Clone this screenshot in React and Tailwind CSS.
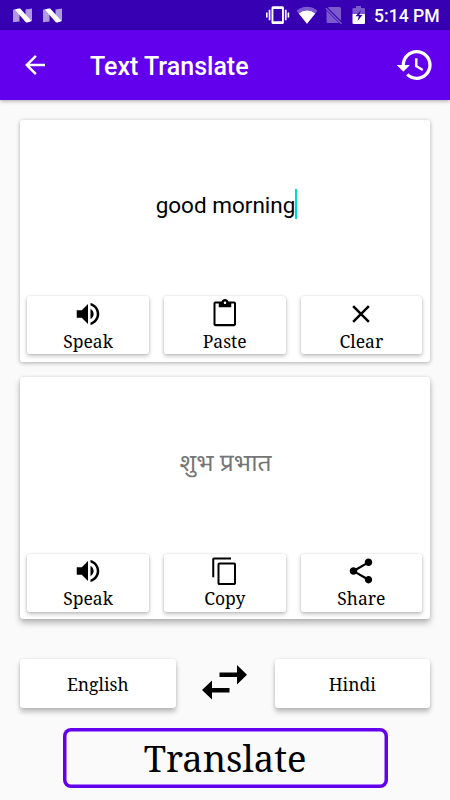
const serif = "font-['Noto_Serif','Droid_Serif','DejaVu_Serif_Condensed','DejaVu_Serif',serif]";

const paths = {
  back: 'M20 11H7.83l5.59-5.59L12 4l-8 8 8 8 1.41-1.41L7.83 13H20v-2z',
  history:
    'M13 3c-4.97 0-9 4.03-9 9H1l3.89 3.89.07.14L9 12H6c0-3.87 3.13-7 7-7s7 3.13 7 7-3.13 7-7 7c-1.93 0-3.68-.79-4.94-2.06l-1.42 1.42C8.27 19.99 10.51 21 13 21c4.97 0 9-4.03 9-9s-4.03-9-9-9zm-1 5v5l4.28 2.54.72-1.21-3.5-2.08V8H12z',
  speak:
    'M3 9v6h4l5 5V4L7 9H3zm13.5 3c0-1.77-1.02-3.29-2.5-4.03v8.05c1.48-.73 2.5-2.25 2.5-4.02zM14 3.23v2.06c2.89.86 5 3.54 5 6.71s-2.11 5.85-5 6.71v2.06c4.01-.91 7-4.49 7-8.77s-2.99-7.86-7-8.77z',
  paste:
    'M19.300 2h-4.480C14.4.84 13.3 0 12 0c-1.3 0-2.4.84-2.82 2H4.300C3.500 2 2.800 2.700 2.800 3.500v16.700c0 .8.7 1.500 1.500 1.500h15c.8 0 1.500-.7 1.500-1.500V3.500c0-.8-.7-1.500-1.500-1.500zM12 1.900c.6 0 1 .5 1 1.100s-.4 1-1 1-1-.4-1-1 .4-1.100 1-1.100zM19.200 20H4.400V3.600H7V6.600h10V3.600h2.200z',
  clear: 'M19 6.41L17.59 5 12 10.59 6.41 5 5 6.41 10.59 12 5 17.59 6.41 19 12 13.41 17.59 19 19 17.59 13.41 12z',
  copy: 'M16.800 1.200H3.300c-.9 0-1.500.6-1.500 1.500V17h1.600V2.800h13.400zM19.300 5.200H7.500C6.700 5.200 6 5.900 6 6.700v15c0 .8.7 1.500 1.500 1.500h11.800c.8 0 1.500-.7 1.500-1.500v-15c0-.8-.7-1.500-1.500-1.500zM19.200 21.600H7.600V6.800h11.600z',
  share:
    'M18 16.08c-.76 0-1.44.3-1.96.77L8.91 12.7c.05-.23.09-.46.09-.7s-.04-.47-.09-.7l7.05-4.11c.54.5 1.25.81 2.04.81 1.66 0 3-1.34 3-3s-1.34-3-3-3-3 1.34-3 3c0 .24.04.47.09.7L8.04 9.81C7.5 9.31 6.79 9 6 9c-1.66 0-3 1.34-3 3s1.34 3 3 3c.79 0 1.5-.31 2.04-.81l7.12 4.16c-.05.21-.08.43-.08.65 0 1.61 1.31 2.92 2.92 2.92s2.92-1.31 2.92-2.92-1.31-2.92-2.92-2.92z',
};

function Icon({ name, className }) {
  return (
    <svg viewBox="0 0 24 24" fill="currentColor" fillRule="evenodd" className={className}>
      <path d={paths[name]} />
    </svg>
  );
}

function NLogo() {
  return (
    <svg viewBox="0 0 19 15" className="h-[15px] w-[19px]" fill="#fff">
      <path d="M0 1.800 3 1 6.500 5v8.500L0 14.300z" opacity=".6" />
      <path d="M12.500 1.500 19 .5v12.500L16.500 14 12.500 9z" opacity=".6" />
      <path d="M2 1.800Q5 0 7.200.5L18.300 12.700Q15.500 15 12.800 14.200z" />
    </svg>
  );
}

function StatusBar() {
  return (
    <div className="flex h-[30px] items-center bg-[#3700b3] pl-[13px] pr-[10px] text-white">
      <NLogo />
      <div className="w-[11px]" />
      <NLogo />
      <svg viewBox="0 0 100 30" className="ml-auto h-[30px] w-[100px]" fill="#fff">
        <path d="M7 6.2h9.4a1.5 1.5 0 0 1 1.5 1.5v14.8a1.5 1.5 0 0 1-1.5 1.5H7a1.5 1.5 0 0 1-1.5-1.5V7.7A1.5 1.5 0 0 1 7 6.2zM7.4 9v12.2h8.6V9zM2.7 9.800h1.700v10.500H2.700zM0 12.500h1.600v5H0zM18.900 9.800h1.700v10.500h-1.700zM21.600 12.500h1.600v5h-1.600z" fillRule="evenodd" />
        <path d="M30.500 10.700a16 16 0 0 1 21 0L41 23.800z" opacity=".35" />
        <path d="M32.800 13.500a13 13 0 0 1 16.400 0L41 23.800z" />
        <path d="M63.500 7h10a1.500 1.500 0 0 1 1.500 1.500v12.300L61.700 7.500zM60.500 10.500 73 23H62a1.500 1.500 0 0 1-1.500-1.500z" opacity=".35" />
        <path d="m59.500 8.800 1-1L76 23.200l-1 1z" opacity=".35" />
        <path d="M87 8h3V6h5v2h3a1 1 0 0 1 1 1v5H86.500V9a1 1 0 0 1 .5-1z" opacity=".35" />
        <path d="M86.500 14H99v9a1 1 0 0 1-1 1H87.500a1 1 0 0 1-1-1z" />
        <path d="m95 10-5.500 6.300h3.300L91.500 21l5-6h-3.200z" fill="#3700b3" />
      </svg>
      <span className="ml-[8px] w-[66px] whitespace-nowrap pt-px font-[Roboto,sans-serif] text-[17.6px] font-medium leading-[30px]">
        5:14 PM
      </span>
    </div>
  );
}

function AppBar() {
  return (
    <header className="flex h-[70px] items-center bg-[#6200ee] pl-5 pr-[15px] text-white shadow-[0_1px_4px_rgba(0,0,0,0.35)]">
      <Icon name="back" className="size-[30px]" />
      <h1 className="ml-[40px] mt-[3px] font-[Roboto,sans-serif] text-[25px] font-medium leading-[30px]">Text Translate</h1>
      <Icon name="history" className="ml-auto size-10" />
    </header>
  );
}

function Action({ icon, label, compact }) {
  return (
    <button
      className={`flex h-[58px] flex-1 flex-col items-center rounded-[2.5px] bg-white shadow-[0_2px_4px_rgba(0,0,0,0.26),0_0_2px_rgba(0,0,0,0.12)] ${compact ? 'pt-[2px]' : 'pt-[3px]'}`}
    >
      <Icon name={icon} className="size-[30px]" />
      <span className={`${serif} text-[17.5px] leading-[24px]`}>{label}</span>
    </button>
  );
}

function Card({ children, actions, compact, className }) {
  return (
    <section className={`flex h-[242px] flex-col rounded-[3px] bg-white px-[7.5px] ${className}`}>
      <div className="flex flex-1 items-center justify-center">{children}</div>
      <div className="-ml-[0.3px] mr-[0.3px] flex gap-[15px]">
        {actions.map(([icon, label]) => (
          <Action key={label} icon={icon} label={label} compact={compact} />
        ))}
      </div>
    </section>
  );
}

function Language({ children }) {
  return (
    <button
      className={`${serif} h-[49px] w-[155.5px] rounded-[3px] bg-white pt-[2px] text-[17.5px] shadow-[0_4px_5px_rgba(0,0,0,0.24),0_0_3px_rgba(0,0,0,0.12)]`}
    >
      {children}
    </button>
  );
}

export default function App() {
  return (
    <div className="flex h-[800px] w-[450px] flex-col overflow-hidden bg-[#fafafa] text-black">
      <StatusBar />
      <AppBar />
      <main className="flex flex-col px-5 pt-5">
        <Card
          className="pb-[8px] shadow-[0_1px_4px_rgba(0,0,0,0.32)]"
          actions={[['speak', 'Speak'], ['paste', 'Paste'], ['clear', 'Clear']]}
        >
          <span className="ml-[3px] mt-[-7px] font-[Roboto,sans-serif] text-[22.5px] leading-[30px]">good morning</span>
          <span className="mt-[-9px] h-[30px] w-[2px] bg-[#03dac5]" />
        </Card>
        <Card
          compact
          className="mt-[15px] pb-[7px] shadow-[0_4px_6px_rgba(0,0,0,0.28),0_0_3px_rgba(0,0,0,0.12)]"
          actions={[['speak', 'Speak'], ['copy', 'Copy'], ['share', 'Share']]}
        >
          <span
            lang="hi"
            className="ml-px mt-[-2px] font-['Noto_Sans_Devanagari','Noto_Sans',sans-serif] text-[24.6px] leading-[30px] text-[#757575]"
          >
            शुभ प्रभात
          </span>
        </Card>
        <div className="mt-10 flex items-center justify-between">
          <Language>English</Language>
          <svg viewBox="0 0 45 36" className="mb-[2px] mr-[2px] h-[36px] w-[45px]">
            <path d="M35 0 45 9.700 35 19.500V12H17.500V7.500H35zM10 15.500V23h17.500v4.500H10V34.500L0 25z" />
          </svg>
          <Language>Hindi</Language>
        </div>
        <button
          className={`${serif} mt-[19.5px] h-[60px] w-[325px] self-center rounded-[8px] text-[36.3px] leading-[60px] shadow-[inset_0_0_0_3.5px_#6200ee]`}
        >
          Translate
        </button>
      </main>
    </div>
  );
}
